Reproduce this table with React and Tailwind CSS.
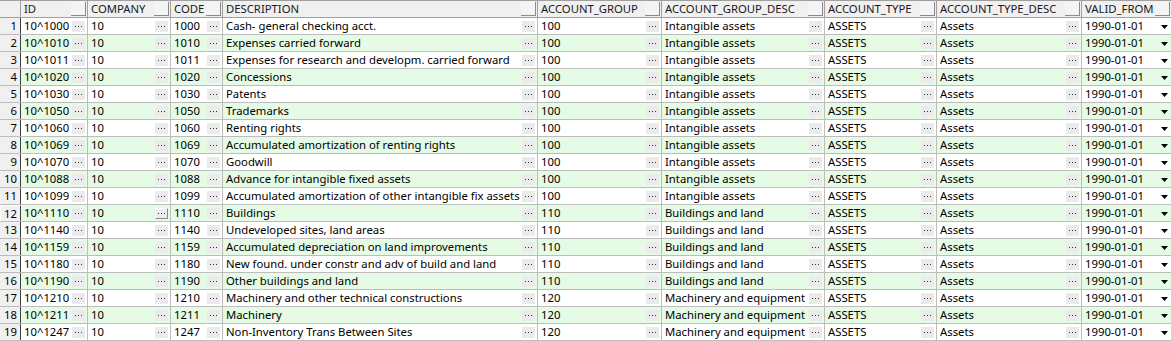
import React from "react";

const cols = [
  { key: "id", label: "ID", w: "w-[67px]" },
  { key: "company", label: "COMPANY", w: "w-[83px]" },
  { key: "code", label: "CODE", w: "w-[52px]" },
  { key: "desc", label: "DESCRIPTION", w: "w-[315px]" },
  { key: "ag", label: "ACCOUNT_GROUP", w: "w-[124px]" },
  { key: "agd", label: "ACCOUNT_GROUP_DESC", w: "w-[163px]" },
  { key: "at", label: "ACCOUNT_TYPE", w: "w-[112px]" },
  { key: "atd", label: "ACCOUNT_TYPE_DESC", w: "w-[145px]" },
  { key: "vf", label: "VALID_FROM", w: "w-[90px]" },
];

const raw = [
  ["1000", "Cash- general checking acct.", "100"],
  ["1010", "Expenses carried forward", "100"],
  ["1011", "Expenses for research and developm. carried forward", "100"],
  ["1020", "Concessions", "100"],
  ["1030", "Patents", "100"],
  ["1050", "Trademarks", "100"],
  ["1060", "Renting rights", "100"],
  ["1069", "Accumulated amortization of renting rights", "100"],
  ["1070", "Goodwill", "100"],
  ["1088", "Advance for intangible fixed assets", "100"],
  ["1099", "Accumulated amortization of other intangible fix assets", "100"],
  ["1110", "Buildings", "110"],
  ["1140", "Undeveloped sites, land areas", "110"],
  ["1159", "Accumulated depreciation on land improvements", "110"],
  ["1180", "New found. under constr and adv of build and land", "110"],
  ["1190", "Other buildings and land", "110"],
  ["1210", "Machinery and other technical constructions", "120"],
  ["1211", "Machinery", "120"],
  ["1247", "Non-Inventory Trans Between Sites", "120"],
];

const groupDesc = {
  "100": "Intangible assets",
  "110": "Buildings and land",
  "120": "Machinery and equipment",
};

const rows = raw.map(([code, desc, ag]) => ({
  id: "10^" + code,
  company: "10",
  code,
  desc,
  ag,
  agd: groupDesc[ag],
  at: "ASSETS",
  atd: "Assets",
  vf: "1990-01-01",
}));

function Dots({ raised }) {
  return (
    <span
      className={
        "absolute right-[2px] top-[3px] flex h-[11px] w-[13px] items-center justify-center gap-[2px] " +
        (raised
          ? "border border-t-white border-l-white border-r-[#8a8a8a] border-b-[#8a8a8a] bg-[#ececec]"
          : "bg-[#ebebeb]")
      }
    >
      <span className="h-[1px] w-[1px] bg-[#333]" />
      <span className="h-[1px] w-[1px] bg-[#333]" />
      <span className="h-[1px] w-[1px] bg-[#333]" />
    </span>
  );
}

function Arrow() {
  return (
    <span className="absolute right-[3px] top-[7px] flex">
      <svg width="7" height="4" viewBox="0 0 7 4">
        <path d="M0 0 H7 L3.5 4 Z" fill="#000" />
      </svg>
    </span>
  );
}

export default function App() {
  return (
    <div
      className="h-[341px] w-[1171px] overflow-hidden bg-white text-[11.3px] text-black"
      style={{ fontFamily: '"Noto Sans", "Open Sans", sans-serif' }}
    >
      {/* header */}
      <div className="flex h-[18px] border-t border-b border-[#a0a0a0] bg-[#f0f0f0]">
        <div className="w-[21px] shrink-0 border-r border-[#a0a0a0]" />
        {cols.map((c) => (
          <div
            key={c.key}
            className={`${c.w} relative flex shrink-0 items-center border-r border-[#a0a0a0] pl-[3px] leading-[16px]`}
          >
            <span className="text-[#1a1a1a]">{c.label}</span>
            <span className="absolute right-[1px] top-[1px] h-[14px] w-[15px] border-r border-b border-[#8a8a8a] bg-[#f4f4f4]" />
          </div>
        ))}
      </div>
      {/* rows */}
      {rows.map((r, i) => {
        const even = i % 2 === 1;
        return (
          <div
            key={i}
            className={`flex h-[17px] border-b border-[#bdbdbd] ${
              even ? "bg-[#e5fbe5]" : "bg-white"
            }`}
          >
            <div
              className={`flex w-[21px] shrink-0 items-center justify-end border-r border-r-[#404040] bg-[#f0f0f0] pr-[3px] leading-[16px] ${
                i === 11 ? "border-t border-l border-t-white border-l-white" : ""
              }`}
            >
              {i + 1}
            </div>
            {cols.map((c) => (
              <div
                key={c.key}
                className={`${c.w} relative flex shrink-0 items-center overflow-hidden whitespace-nowrap border-r border-[#bdbdbd] pl-[3px] leading-[16px]`}
              >
                <span>{r[c.key]}</span>
                {c.key === "vf" ? (
                  <Arrow />
                ) : (
                  <Dots raised={i === 11 && c.key === "company"} />
                )}
              </div>
            ))}
          </div>
        );
      })}
    </div>
  );
}
